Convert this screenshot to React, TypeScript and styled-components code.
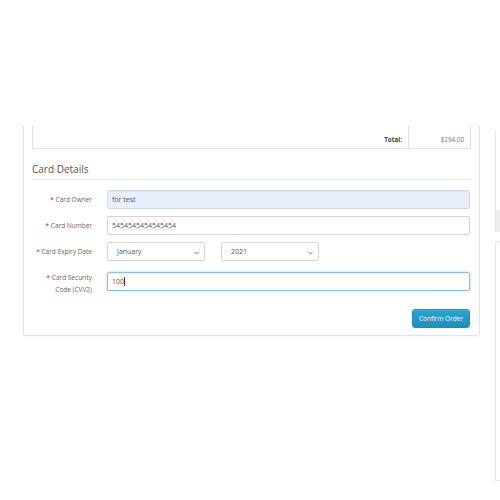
import styled, { createGlobalStyle } from "styled-components";

const GlobalStyle = createGlobalStyle`
  html, body {
    margin: 0;
    padding: 0;
    background: #fff;
    overflow: hidden;
  }
  body {
    font-family: "Open Sans", "Liberation Sans", sans-serif;
    color: #555;
  }
  * {
    box-sizing: border-box;
  }
`;

export default function App() {
  return (
    <>
      <GlobalStyle />
      <Page>
        <Panel>
          <SummaryTable>
            <SummaryCell $strong>Total:</SummaryCell>
            <SummaryCell>$294.00</SummaryCell>
          </SummaryTable>

          <Legend>Card Details</Legend>

          <Form>
            <Row>
              <Label>Card Owner</Label>
              <Input $autofill readOnly defaultValue="for test" />
            </Row>
            <Row>
              <Label>Card Number</Label>
              <Input readOnly defaultValue="5454545454545454" />
            </Row>
            <Row>
              <Label>Card Expiry Date</Label>
              <SelectGroup>
                <Select>
                  January
                  <Chevron />
                </Select>
                <Select>
                  2021
                  <Chevron />
                </Select>
              </SelectGroup>
            </Row>
            <Row>
              <Label $top>
                Card Security
                <br />
                Code (CVV2)
              </Label>
              <FieldWrap>
                <Input $focused readOnly defaultValue="100" />
                <Caret />
              </FieldWrap>
            </Row>
          </Form>

          <Buttons>
            <ConfirmButton>Confirm Order</ConfirmButton>
          </Buttons>
        </Panel>

        <Sidebar>
          <SideBox>
            <SideBar />
          </SideBox>
          <SidePanel />
        </Sidebar>
      </Page>
    </>
  );
}

function Chevron() {
  return (
    <ChevronIcon viewBox="0 0 8 5" width="5" height="4">
      <path d="M1 1 L4 4 L7 1" fill="none" stroke="#666" strokeWidth="1.4" />
    </ChevronIcon>
  );
}

const Page = styled.div`
  display: flex;
  align-items: flex-start;
  gap: 15px;
  padding: 126px 0 0 23px;
  width: 500px;
  height: 500px;
  overflow: hidden;
`;

const Panel = styled.div`
  width: 457px;
  flex-shrink: 0;
  border: 1px solid #e4e4e4;
  border-top: none;
  border-radius: 0 0 3px 3px;
  padding: 0 8px 7px;
  box-shadow: 0 1px 1px rgba(0, 0, 0, 0.03);
`;

const SummaryTable = styled.div`
  display: grid;
  grid-template-columns: 1fr 61px;
  border: 1px solid #e0e0e0;
  border-top: none;
  height: 23px;
`;

const SummaryCell = styled.div<{ $strong?: boolean }>`
  padding: 9px 6px 0;
  text-align: right;
  font-size: 6.3px;
  line-height: 10px;
  font-weight: ${(p) => (p.$strong ? 700 : 400)};
  color: ${(p) => (p.$strong ? "#444" : "#777")};
  border-right: ${(p) => (p.$strong ? "1px solid #e0e0e0" : "none")};
`;

const Legend = styled.h2`
  margin: 13px 0 0;
  padding-bottom: 3px;
  font-size: 10px;
  line-height: 14px;
  font-weight: 400;
  color: #555;
  border-bottom: 1px solid #e8e8e8;
`;

const Form = styled.div`
  display: flex;
  flex-direction: column;
  gap: 7px;
  padding-top: 10px;
`;

const Row = styled.div`
  display: grid;
  grid-template-columns: 75px 1fr;
  align-items: center;
  margin-right: 1px;
`;

const Label = styled.label<{ $top?: boolean }>`
  align-self: ${(p) => (p.$top ? "start" : "center")};
  padding: ${(p) => (p.$top ? "3.5px" : "0")} 15px 0 0;
  text-align: right;
  font-size: 6.5px;
  line-height: 12px;
  color: #666;

  &::before {
    content: "* ";
    color: #f00;
  }
`;

const Input = styled.input<{ $autofill?: boolean; $focused?: boolean }>`
  display: block;
  width: 100%;
  height: 19px;
  padding: 0 4px;
  font-family: inherit;
  font-size: 7px;
  color: #555;
  border-radius: 2px;
  outline: none;
  border: 1px solid ${(p) => (p.$focused ? "#8cbfe8" : p.$autofill ? "#d3dbe6" : "#d6d6d6")};
  background: ${(p) => (p.$autofill ? "#e8f0fe" : "#fff")};
  box-shadow: ${(p) =>
    p.$focused
      ? "inset 0 1px 1px rgba(0,0,0,.05), 0 0 3px rgba(102,175,233,.5)"
      : "inset 0 1px 1px rgba(0,0,0,.04)"};
`;

const FieldWrap = styled.div`
  position: relative;
`;

const Caret = styled.span`
  position: absolute;
  left: 17px;
  top: 5px;
  width: 1px;
  height: 9px;
  background: #333;
`;

const SelectGroup = styled.div`
  display: flex;
  gap: 16px;
`;

const Select = styled.div`
  position: relative;
  width: 98px;
  height: 19px;
  padding: 0 9px;
  display: flex;
  align-items: center;
  font-size: 7px;
  color: #555;
  border: 1px solid #d6d6d6;
  border-radius: 2px;
  background: #fff;
`;

const ChevronIcon = styled.svg`
  position: absolute;
  right: 5px;
  top: 7.5px;
`;

const Buttons = styled.div`
  display: flex;
  justify-content: flex-end;
  margin: 13px 1px 0 0;
`;

const ConfirmButton = styled.button`
  width: 58px;
  height: 19px;
  padding: 0;
  font-family: inherit;
  font-size: 6.5px;
  color: #fff;
  border: 1px solid #1f8bb8;
  border-radius: 3px;
  background: linear-gradient(to bottom, #24a4d4, #1e8fbd);
  box-shadow: inset 0 1px 0 rgba(255, 255, 255, 0.15), 0 1px 1px rgba(0, 0, 0, 0.05);
`;

const Sidebar = styled.div`
  display: flex;
  flex-direction: column;
  gap: 9px;
  width: 200px;
  flex-shrink: 0;
  padding-top: 4px;
`;

const SideBox = styled.div`
  height: 102px;
  border-left: 1px solid #e6e6e6;
  display: flex;
  flex-direction: column;
  justify-content: flex-end;
`;

const SideBar = styled.div`
  height: 22px;
  background: #eeeeee;
`;

const SidePanel = styled.div`
  height: 240px;
  border: 1px solid #e6e6e6;
  border-radius: 3px 0 0 0;
`;
